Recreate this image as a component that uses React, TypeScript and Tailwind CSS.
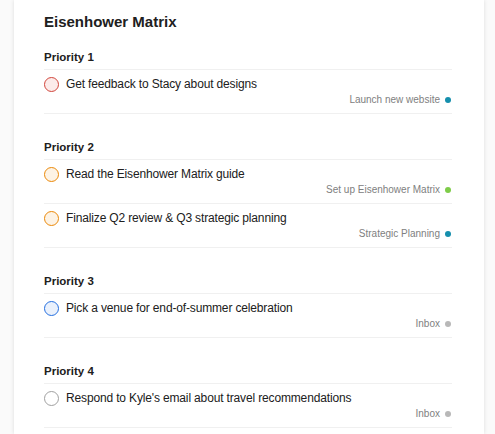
import React from 'react';

type Task = { title: string; project: string; dot: string };
type Section = { name: string; ring: string; tasks: Task[] };

const sections: Section[] = [
  {
    name: 'Priority 1',
    ring: 'border-[#d1453b] bg-[#fcebea]',
    tasks: [{ title: 'Get feedback to Stacy about designs', project: 'Launch new website', dot: 'bg-[#158fad]' }],
  },
  {
    name: 'Priority 2',
    ring: 'border-[#eb8909] bg-[#fdf3e5]',
    tasks: [
      { title: 'Read the Eisenhower Matrix guide', project: 'Set up Eisenhower Matrix', dot: 'bg-[#7ecc49]' },
      { title: 'Finalize Q2 review & Q3 strategic planning', project: 'Strategic Planning', dot: 'bg-[#158fad]' },
    ],
  },
  {
    name: 'Priority 3',
    ring: 'border-[#246fe0] bg-[#eaf1fc]',
    tasks: [{ title: 'Pick a venue for end-of-summer celebration', project: 'Inbox', dot: 'bg-[#b8b8b8]' }],
  },
  {
    name: 'Priority 4',
    ring: 'border-[#a0a0a0] bg-white',
    tasks: [{ title: "Respond to Kyle's email about travel recommendations", project: 'Inbox', dot: 'bg-[#b8b8b8]' }],
  },
];

export default function App() {
  return (
    <div className="h-[434px] overflow-hidden bg-[#fafafa] pl-[14px] pr-[11px] font-['Liberation_Sans',Arial,sans-serif] text-[#202020]">
      <div className="h-full bg-white pl-[30px] pr-[32px] shadow-[0_0_4px_rgba(0,0,0,0.12)]">
        <h1 className="pt-[10px] text-[15px] font-bold leading-[24px]">Eisenhower Matrix</h1>

        {sections.map((s, i) => (
          <section key={s.name}>
            <h2
              className={`${i === 0 ? 'pt-[14px]' : 'pt-[24px]'} border-b border-[#f0f0f0] pb-[3px] text-[11.5px] font-bold leading-[18px]`}
            >
              {s.name}
            </h2>
            {s.tasks.map((t) => (
              <div key={t.title} className="border-b border-[#f0f0f0] pt-[5px] pb-[6px]">
                <div className="flex items-center gap-[7px]">
                  <span className={`h-[15px] w-[15px] shrink-0 rounded-full border-[1.75px] ${s.ring}`} />
                  <span className="text-[12px] leading-[18px] tracking-[-0.15px]">{t.title}</span>
                </div>
                <div className="flex items-center justify-end gap-[5px] text-[10px] leading-[14px] text-[#808080]">
                  <span>{t.project}</span>
                  <span className={`mr-[1px] h-[6px] w-[6px] rounded-full ${t.dot}`} />
                </div>
              </div>
            ))}
          </section>
        ))}
      </div>
    </div>
  );
}
